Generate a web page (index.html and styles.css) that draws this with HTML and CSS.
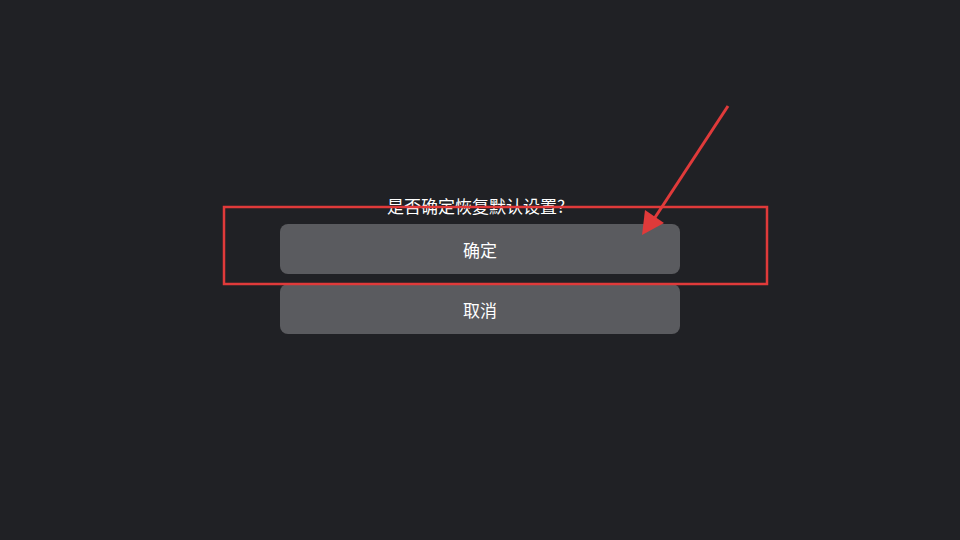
FILE: index.html
```html
<!DOCTYPE html>
<html lang="zh-CN">
<head>
    <meta charset="UTF-8">
    <title>恢复默认设置</title>
    <link rel="stylesheet" href="styles.css">
</head>
<body>
    <div class="dialog">
        <div class="dialog-title">是否确定恢复默认设置?</div>
        <button class="dialog-btn">确定</button>
        <button class="dialog-btn">取消</button>
    </div>
    <svg class="annotation" width="960" height="540" viewBox="0 0 960 540">
        <rect x="224" y="207" width="543" height="77" fill="none" stroke="#e03a3a" stroke-width="2.5"/>
        <line x1="728" y1="106" x2="654" y2="219" stroke="#e03a3a" stroke-width="3"/>
        <polygon points="642,235 645,210 664,223" fill="#e03a3a"/>
    </svg>
</body>
</html>
```

FILE: styles.css
```css
body {
    margin: 0;
    height: 100vh;
    background: #202125;
    font-family: "Noto Sans CJK SC", "Noto Sans", sans-serif;
    color: #fff;
    display: flex;
    justify-content: center;
    padding-top: 197px;
    box-sizing: border-box;
    overflow: hidden;
}
.dialog {
    width: 400px;
    display: flex;
    flex-direction: column;
    gap: 10px;
}
.dialog-title {
    font-size: 17px;
    line-height: 17px;
    height: 17px;
    text-align: center;
    margin-right: 8px;
}
.dialog-btn {
    height: 50px;
    border: none;
    border-radius: 8px;
    background: #5a5b5f;
    color: #fff;
    font-family: inherit;
    font-size: 17px;
}
.annotation {
    position: absolute;
    left: 0;
    top: 0;
}
```
